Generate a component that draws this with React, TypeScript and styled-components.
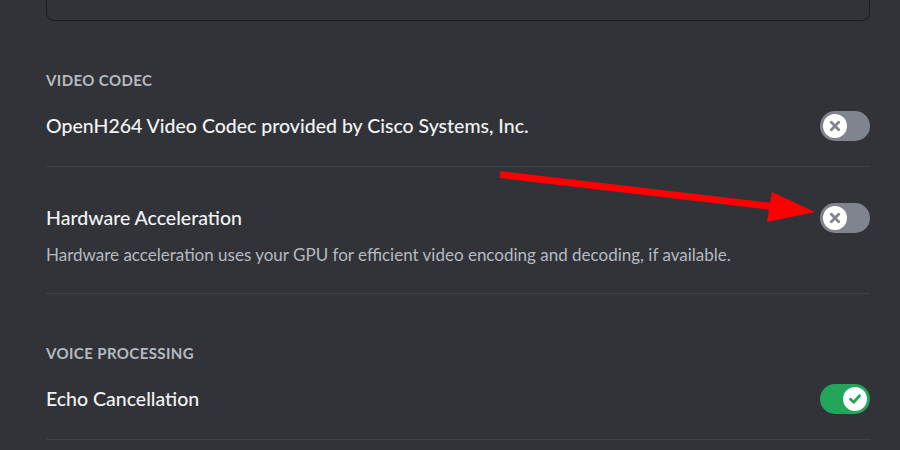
import styled, { createGlobalStyle } from 'styled-components';

const GlobalStyle = createGlobalStyle`
    html, body {
        margin: 0;
        padding: 0;
        background: #313338;
    }
    body {
        font-family: Lato, "Noto Sans", sans-serif;
        -webkit-font-smoothing: antialiased;
    }
`;

const Page = styled.div`
    position: relative;
    width: 900px;
    height: 450px;
    overflow: hidden;
    background: #313338;
    padding: 0 30px 0 46px;
    box-sizing: border-box;
    display: flex;
    flex-direction: column;
`;

const TopBox = styled.div`
    height: 21px;
    box-sizing: border-box;
    border: 1px solid #1e1f22;
    border-top: none;
    border-radius: 0 0 8px 8px;
`;

const SectionTitle = styled.h2`
    margin: 49px 0 21px;
    font-size: 15px;
    line-height: 20px;
    font-weight: 700;
    letter-spacing: 0.4px;
    text-transform: uppercase;
    color: #b5bac1;
`;

const Item = styled.div<{ top: number; bottom: number }>`
    padding: ${(p) => p.top}px 0 ${(p) => p.bottom}px;
    border-bottom: 1px solid #3f4147;
`;

const Row = styled.div`
    display: flex;
    align-items: center;
    justify-content: space-between;
    min-height: 30px;
`;

const Label = styled.div`
    font-size: 19.5px;
    line-height: 26px;
    font-weight: 500;
    color: #f2f3f5;
`;

const Note = styled.div`
    margin-top: 11px;
    font-size: 17px;
    line-height: 22px;
    color: #b5bac1;
`;

const Track = styled.div<{ on?: boolean }>`
    width: 50px;
    height: 30px;
    flex-shrink: 0;
    border-radius: 15px;
    box-sizing: border-box;
    padding: 3px;
    background: ${(p) => (p.on ? '#23a55a' : '#80848e')};
    display: flex;
    justify-content: ${(p) => (p.on ? 'flex-end' : 'flex-start')};
`;

const Knob = styled.div`
    width: 24px;
    height: 24px;
    border-radius: 50%;
    background: #ffffff;
    display: flex;
    align-items: center;
    justify-content: center;
`;

const Arrow = styled.svg`
    position: absolute;
    left: 0;
    top: 0;
    pointer-events: none;
`;

const Toggle = ({ on }: { on?: boolean }) => (
    <Track on={on}>
        <Knob>
            {on ? (
                <svg width="16" height="16" viewBox="0 0 16 16">
                    <path d="M3.5 8.3 L6.6 11.3 L12.6 4.8" fill="none" stroke="#23a55a" strokeWidth="2.8" strokeLinecap="round" strokeLinejoin="round" />
                </svg>
            ) : (
                <svg width="16" height="16" viewBox="0 0 16 16">
                    <path d="M4.3 4.3 L11.7 11.7 M11.7 4.3 L4.3 11.7" fill="none" stroke="#80848e" strokeWidth="2.8" strokeLinecap="round" />
                </svg>
            )}
        </Knob>
    </Track>
);

export default function App() {
    return (
        <>
            <GlobalStyle />
            <Page>
                <TopBox />
                <SectionTitle>Video Codec</SectionTitle>
                <Item top={0} bottom={25}>
                    <Row>
                        <Label>OpenH264 Video Codec provided by Cisco Systems, Inc.</Label>
                        <Toggle />
                    </Row>
                </Item>
                <Item top={36} bottom={27}>
                    <Row>
                        <Label>Hardware Acceleration</Label>
                        <Toggle />
                    </Row>
                    <Note>Hardware acceleration uses your GPU for efficient video encoding and decoding, if available.</Note>
                </Item>
                <SectionTitle>Voice Processing</SectionTitle>
                <Item top={0} bottom={25}>
                    <Row>
                        <Label>Echo Cancellation</Label>
                        <Toggle on />
                    </Row>
                </Item>
                <Arrow width="900" height="450" viewBox="0 0 900 450">
                    <line x1="500" y1="174.5" x2="785" y2="208" stroke="#ff0000" strokeWidth="7" />
                    <polygon points="772,192 815,212 767,222" fill="#ff0000" />
                </Arrow>
            </Page>
        </>
    );
}
